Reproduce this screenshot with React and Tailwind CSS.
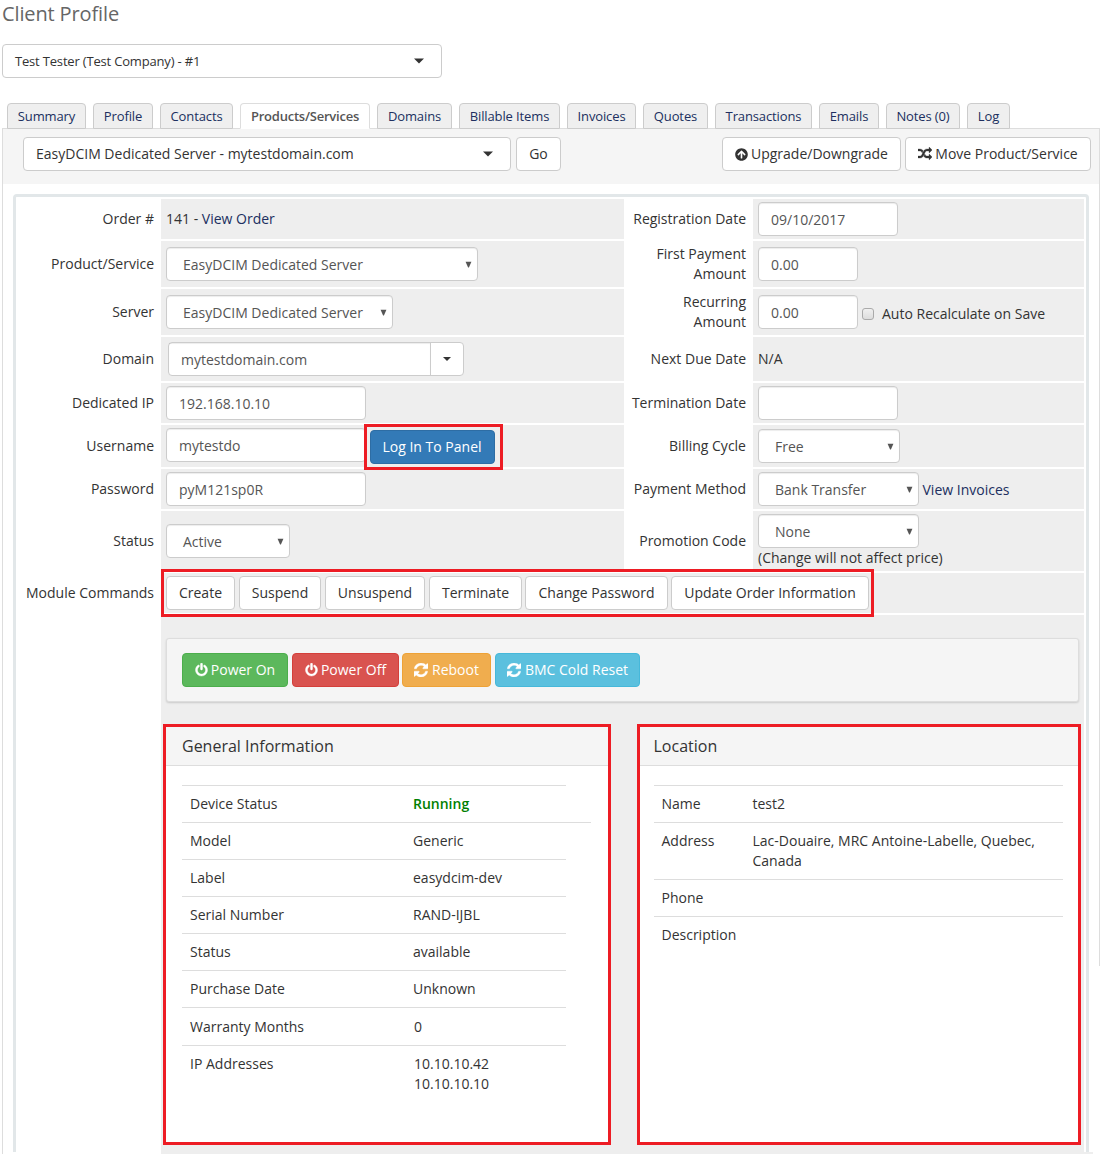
import React from "react";
import { FaArrowCircleUp } from "react-icons/fa";

const Caret = () => (
  <svg width="12" height="6" viewBox="0 0 12 6" fill="#333"><path d="M1 0.5H11L6 5.5Z" /></svg>
);
const Tri = () => (
  <svg width="7" height="7" viewBox="0 0 7 7" fill="#555"><path d="M0.6 0.8H6.4L3.9 6.4H3.1Z" /></svg>
);
const Shuffle = () => (
  <svg width="14" height="14" viewBox="0 0 1792 1792" fill="currentColor" stroke="currentColor" strokeWidth="40"><path d="M666 481q-60 92-137 273-22-45-37-72.500t-40.500-63.500-51-56.500-63-35-81.500-14.500h-224q-14 0-23-9t-9-23v-192q0-14 9-23t23-9h224q250 0 410 225zm1126 799q0 14-9 23l-320 320q-9 9-23 9-13 0-22.500-9.500t-9.500-22.500v-192q-32 0-85 .5t-81 1-73-1-71-5-64-10.500-63-18.500-58-28.500-59-40-55-53.500-56-69.500q59-93 136-273 22 45 37 72.500t40.500 63.500 51 56.500 63 35 81.500 14.500h256v-192q0-14 9-23t23-9q12 0 24 10l319 319q9 9 9 23zm0-896q0 14-9 23l-320 320q-9 9-23 9-13 0-22.500-9.500t-9.500-22.500v-192h-256q-48 0-87 15t-69 45-51 61.500-45 77.500q-32 62-78 171-29 66-49.500 111t-54 105-64 100-74 83-90 68.500-106.500 42-128 16.500h-224q-14 0-23-9t-9-23v-192q0-14 9-23t23-9h224q48 0 87-15t69-45 51-61.500 45-77.500q32-62 78-171 29-66 49.500-111t54-105 64-100 74-83 90-68.500 106.500-42 128-16.500h256v-192q0-14 9-23t23-9q12 0 24 10l319 319q9 9 9 23z" /></svg>
);
const Power = () => (
  <svg width="13" height="14" viewBox="64 0 1664 1792" fill="currentColor" stroke="currentColor" strokeWidth="50"><path d="M1664 896q0 156-61 298t-164 245-245 164-298 61-298-61-245-164-164-245-61-298q0-182 80.500-343t226.500-270q43-32 95.500-25t83.500 50q32 42 24.500 94.500t-49.500 84.500q-98 74-151.500 181t-53.500 228q0 104 40.500 198.500t109.500 163.500 163.500 109.500 198.500 40.500 198.500-40.500 163.500-109.500 109.500-163.500 40.500-198.500q0-121-53.500-228t-151.500-181q-42-32-49.500-84.500t24.500-94.500q31-43 84-50t95 25q146 109 226.500 270t80.500 343zm-640-768v640q0 52-38 90t-90 38-90-38-38-90v-640q0-52 38-90t90-38 90 38 38 90z" /></svg>
);
const Refresh = () => (
  <svg width="14" height="14" viewBox="0 0 1536 1536" fill="currentColor" stroke="currentColor" strokeWidth="40"><path d="M1511 928q0 5-1 7-64 268-268 434.500t-478 166.500q-146 0-282.500-55t-243.500-157l-129 129q-19 19-45 19t-45-19-19-45v-448q0-26 19-45t45-19h448q26 0 45 19t19 45-19 45l-137 137q71 66 161 102t187 36q134 0 250-65t186-179q11-17 53-117 8-23 30-23h192q13 0 22.500 9.500t9.500 22.500zm25-800v448q0 26-19 45t-45 19h-448q-26 0-45-19t-19-45 19-45l138-138q-148-137-349-137-134 0-250 65t-186 179q-11 17-53 117-8 23-30 23h-199q-13 0-22.500-9.500t-9.500-22.500v-7q65-268 270-434.500t480-166.500q146 0 284 55.500t245 156.500l130-129q19-19 45-19t45 19 19 45z" /></svg>
);

const Input = ({ w, children }) => (
  <div className={"flex h-[34px] shrink-0 items-center rounded border border-[#ccc] bg-white px-3 pt-[2px] text-[#555] shadow-[inset_0_1px_1px_rgba(0,0,0,0.075)] " + w}>{children}</div>
);
const Select = ({ w, children }) => (
  <div className={"flex h-[34px] shrink-0 items-center justify-between rounded border border-[#ccc] bg-white pl-4 pr-[5.5px] text-[#555] shadow-[inset_0_1px_1px_rgba(0,0,0,0.075)] " + w}>
    <span className="pt-[2px]">{children}</span>
    <Tri />
  </div>
);
const Btn = ({ w, c = "border-[#ccc] bg-white text-[#333]", gap = "gap-[3px]", children }) => (
  <div className={"flex h-[34px] shrink-0 items-center justify-center rounded border " + gap + " " + w + " " + c}>{children}</div>
);
const Label = ({ children }) => (
  <div className="flex items-center justify-end pr-[5px] text-right">{children}</div>
);
const Field = ({ className = "", children }) => (
  <div className={"flex items-center bg-[#eee] px-[5px] " + className}>{children}</div>
);

const tabs = [
  ["Summary", "w-[79px]"], ["Profile", "w-[60px]"], ["Contacts", "w-[73px]"], ["Products/Services", "w-[130px]"],
  ["Domains", "w-[75px]"], ["Billable Items", "w-[101px]"], ["Invoices", "w-[69px]"], ["Quotes", "w-[65px]"],
  ["Transactions", "w-[97px]"], ["Emails", "w-[60px]"], ["Notes (0)", "w-[74px]"], ["Log", "w-[43px]"],
];
const info = [
  ["Model", "Generic"], ["Label", "easydcim-dev"], ["Serial Number", "RAND-IJBL"], ["Status", "available"], ["Purchase Date", "Unknown"],
];

const InfoRow = ({ name, className = "w-[384px]", valueClass = "", children }) => (
  <div className={"flex border-t border-[#ddd] py-2 pl-2 " + className}>
    <div className="w-[223px] shrink-0">{name}</div>
    <div className={valueClass}>{children}</div>
  </div>
);
const LocRow = ({ name, children }) => (
  <div className="flex border-t border-[#ddd] py-2 pl-[7.5px] pr-2">
    <div className="w-[91px] shrink-0">{name}</div>
    <div>{children}</div>
  </div>
);

export default function App() {
  return (
    <div className="h-[1154px] w-[1100px] overflow-hidden bg-white font-['Open_Sans',sans-serif] text-sm leading-5 text-[#333]">
      <h1 className="h-[44px] pl-[2px] text-[20px] leading-[28px] tracking-[-0.13px] text-[#666]">Client Profile</h1>
      <div className="ml-[2px] flex h-[34px] w-[440px] items-center justify-between rounded border border-[#ccc] pl-3 pr-4 text-[13px]">
        <span className="tracking-[-0.18px]">Test Tester (Test Company) - #1</span>
        <Caret />
      </div>
      <div className="mt-[25px] flex gap-[7px] pl-[7px]">
        {tabs.map(([t, w], i) => (
          <div key={t} className={"relative flex h-[26px] items-center justify-center rounded-t border text-[13px] " + w + (i === 3 ? " border-[#ddd] border-b-white bg-white font-semibold tracking-[-0.22px] text-[#555]" : " border-[#ccc] bg-[#efefef] tracking-[-0.12px] text-[#202f60]")}>{t}</div>
        ))}
      </div>
      <div className="-mt-px ml-[2px] flex h-[1026px] w-[1098px] flex-col border-l border-t border-[#ddd]">
        <div className="flex">
          <div className="min-w-0 flex-1">
            <div className="flex h-[55px] items-start bg-[#f5f5f5] pl-5 pr-2 pt-2">
              <div className="flex h-[34px] w-[488px] items-center justify-between rounded border border-[#ccc] bg-white pl-3 pr-4">
                <span>EasyDCIM Dedicated Server - mytestdomain.com</span>
                <Caret />
              </div>
              <div className="ml-[5px]"><Btn w="w-[45px]">Go</Btn></div>
              <div className="ml-auto flex gap-1">
                <Btn w="w-[179px]"><FaArrowCircleUp size={13} />Upgrade/Downgrade</Btn>
                <Btn w="w-[186px]"><Shuffle />Move Product/Service</Btn>
              </div>
            </div>
            <div className="ml-[10px] mt-[10px] h-[958px] w-[1076px] rounded-t border-x-[3px] border-t-[3px] border-[#e2e7e9] p-[2px] pb-0">
              <div className="grid grid-cols-[141px_463px_125px_331px] grid-rows-[40px_46px_46px_44px_40px_42px_40px_60px_40px_537px] gap-[2px]">
                <Label>Order #</Label>
                <Field><span>141 - <span className="text-[#202f60]">View Order</span></span></Field>
                <Label>Registration Date</Label>
                <Field><Input w="w-[140px]">09/10/2017</Input></Field>

                <Label>Product/Service</Label>
                <Field><Select w="w-[312px]">EasyDCIM Dedicated Server</Select></Field>
                <Label>First Payment<br />Amount</Label>
                <Field><Input w="w-[100px]">0.00</Input></Field>

                <Label>Server</Label>
                <Field><Select w="w-[227px]">EasyDCIM Dedicated Server</Select></Field>
                <Label>Recurring<br />Amount</Label>
                <Field>
                  <Input w="w-[100px]">0.00</Input>
                  <span className="ml-1 mt-1 h-3 w-3 rounded-[3px] border border-[#aaa] bg-linear-to-b from-[#f0f0f0] to-[#ddd]" />
                  <span className="ml-2 mt-1">Auto Recalculate on Save</span>
                </Field>

                <Label>Domain</Label>
                <Field>
                  <div className="ml-[2px] flex h-[34px] w-[296px] rounded border border-[#ccc] bg-white">
                    <div className="flex flex-1 items-center pl-3 pt-[2px] text-[#555] shadow-[inset_0_1px_1px_rgba(0,0,0,0.075)]">mytestdomain.com</div>
                    <div className="flex w-[33px] items-center justify-center border-l border-[#ccc]">
                      <svg width="8" height="4" viewBox="0 0 8 4" fill="#333"><path d="M0 0H8L4 4Z" /></svg>
                    </div>
                  </div>
                </Field>
                <Label>Next Due Date</Label>
                <Field>N/A</Field>

                <Label>Dedicated IP</Label>
                <Field><Input w="w-[200px]">192.168.10.10</Input></Field>
                <Label>Termination Date</Label>
                <Field><Input w="w-[140px]" /></Field>

                <Label>Username</Label>
                <Field className="relative">
                  <div className="-mt-[2px]"><Input w="w-[200px]">mytestdo</Input></div>
                  <div className="absolute -top-px left-[203px] flex h-[46px] w-[139px] items-center justify-center border-[3px] border-[#ed1c24] bg-[#eee]">
                    <div className="-ml-[3px]"><Btn w="w-[125px]" c="border-[#2e6da4] bg-[#337ab7] text-white">Log In To Panel</Btn></div>
                  </div>
                </Field>
                <Label>Billing Cycle</Label>
                <Field><Select w="w-[142px]">Free</Select></Field>

                <Label>Password</Label>
                <Field><Input w="w-[200px]">pyM121sp0R</Input></Field>
                <Label>Payment Method</Label>
                <Field>
                  <Select w="w-[161px]">Bank Transfer</Select>
                  <span className="ml-[3.5px] mt-[2px] text-[#202f60]">View Invoices</span>
                </Field>

                <Label>Status</Label>
                <Field><Select w="w-[124px]">Active</Select></Field>
                <Label>Promotion Code</Label>
                <Field>
                  <div><Select w="w-[161px]">None</Select>(Change will not affect price)</div>
                </Field>

                <Label>Module Commands</Label>
                <Field className="relative col-span-3 gap-1">
                  <Btn w="w-[69px]">Create</Btn>
                  <Btn w="w-[82px]">Suspend</Btn>
                  <Btn w="w-[100px]">Unsuspend</Btn>
                  <Btn w="w-[93px]">Terminate</Btn>
                  <div className="-ml-px"><Btn w="w-[143px]">Change Password</Btn></div>
                  <div className="-ml-px"><Btn w="w-[198px]">Update Order Information</Btn></div>
                  <div className="absolute -top-1 left-0 h-12 w-[713px] border-[3px] border-[#ed1c24]" />
                </Field>

                <div />
                <div className="col-span-3 bg-[#eee]">
                  <div className="ml-[5px] mt-[23px] flex h-[64px] w-[913px] items-center gap-1 rounded-[3px] border border-[#ddd] bg-[#f5f5f5] pl-[15px] shadow-[0_1px_2px_rgba(0,0,0,0.15)]">
                    <Btn w="w-[106px]" c="border-[#4cae4c] bg-[#5cb85c] text-white"><Power />Power On</Btn>
                    <Btn w="w-[107px]" c="border-[#d43f3a] bg-[#d9534f] text-white"><Power />Power Off</Btn>
                    <div className="-ml-px"><Btn w="w-[89px]" gap="gap-1" c="border-[#eea236] bg-[#f0ad4e] text-white"><Refresh />Reboot</Btn></div>
                    <Btn w="w-[145px]" gap="gap-1" c="border-[#46b8da] bg-[#5bc0de] text-white"><Refresh />BMC Cold Reset</Btn>
                  </div>
                  <div className="ml-[2px] mt-[22px] flex gap-[26px]">
                    <div className="h-[421px] w-[448px] border-[3px] border-[#ed1c24] bg-white">
                      <div className="flex h-[39px] items-center border-b border-[#ddd] bg-[#f5f5f5] pl-4 text-base">General Information</div>
                      <div className="pl-4 pt-[19px]">
                        <InfoRow name="Device Status" valueClass="font-semibold text-[#008000]">Running</InfoRow>
                        {info.map(([k, v], i) => (
                          <InfoRow key={k} name={k} className={i === 0 ? "w-[409px]" : "w-[384px]"}>{v}</InfoRow>
                        ))}
                        <InfoRow name="Warranty Months" className="h-[38px] w-[384px] pt-[9px]" valueClass="pl-px">0</InfoRow>
                        <InfoRow name="IP Addresses" valueClass="pl-px">10.10.10.42<br />10.10.10.10</InfoRow>
                      </div>
                    </div>
                    <div className="h-[421px] w-[444px] border-[3px] border-[#ed1c24] bg-white">
                      <div className="flex h-[39px] items-center border-b border-[#ddd] bg-[#f5f5f5] pl-[13.5px] text-base">Location</div>
                      <div className="pl-[14px] pr-[15px] pt-[19px]">
                        <LocRow name="Name">test2</LocRow>
                        <LocRow name="Address">Lac-Douaire, MRC Antoine-Labelle, Quebec, Canada</LocRow>
                        <LocRow name="Phone" />
                        <LocRow name="Description" />
                      </div>
                    </div>
                  </div>
                </div>
              </div>
            </div>
            <div className="ml-[158px] h-[2px] w-[932px] bg-[#eee]" />
          </div>
          <div className="h-[837px] w-px bg-[#ddd]" />
        </div>
      </div>
    </div>
  );
}
